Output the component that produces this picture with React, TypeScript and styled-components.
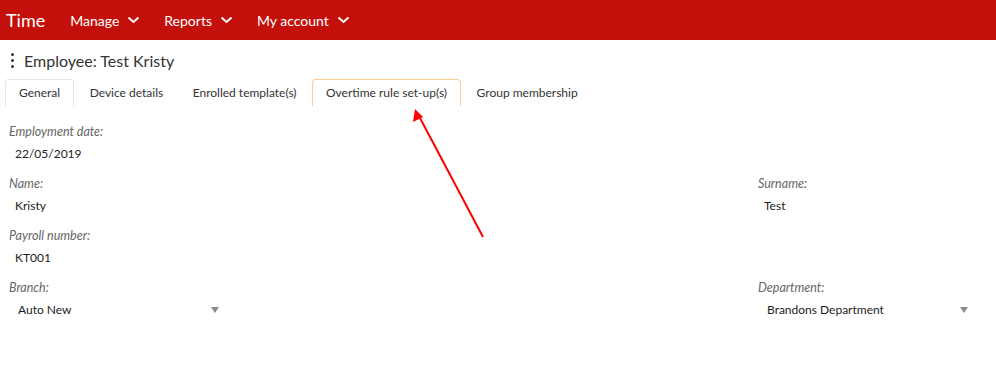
import React from "react";
import styled, { createGlobalStyle } from "styled-components";

const Global = createGlobalStyle`
  html, body { margin: 0; padding: 0; background: #fff; }
  body { font-family: Lato, "Open Sans", sans-serif; color: #333; }
`;

const Page = styled.div`
  position: relative;
  width: 996px;
  height: 370px;
  overflow: hidden;
`;

const TopBar = styled.header`
  height: 40px;
  background: #c4100b;
  display: flex;
  align-items: center;
  padding-left: 6px;
  color: #fff;
`;

const Brand = styled.div`
  font-size: 18px;
  margin-right: 25px;
`;

const NavItem = styled.div`
  font-size: 14px;
  display: flex;
  align-items: center;
  gap: 8px;
  margin-right: 24px;
`;

const Chevron = () => (
  <svg width="13" height="8" viewBox="0 0 13 8">
    <path d="M1.5 1.5 L6.5 6 L11.5 1.5" stroke="#fff" strokeWidth="2" fill="none" />
  </svg>
);

const TitleRow = styled.div`
  display: flex;
  align-items: center;
  padding: 10px 0 0 11px;
  height: 20px;
`;

const Kebab = styled.div`
  display: flex;
  flex-direction: column;
  gap: 3px;
  margin-right: 10px;
  & span {
    width: 3px;
    height: 3px;
    border-radius: 50%;
    background: #333;
  }
`;

const Title = styled.h1`
  margin: 0;
  font-size: 16px;
  font-weight: 400;
  color: #333;
`;

const Tabs = styled.div`
  display: flex;
  margin: 9px 0 0 5px;
`;

const Tab = styled.div<{ $active?: boolean; $hover?: boolean }>`
  font-size: 12px;
  height: 27px;
  line-height: 26px;
  padding: 0 13px;
  margin-right: 1.5px;
  box-sizing: border-box;
  color: #333;
  border: 1px solid
    ${(p) => (p.$active ? "#e3e6ea" : p.$hover ? "#f9cf96" : "transparent")};
  border-bottom: none;
  border-radius: 4px 4px 0 0;
`;

const Form = styled.div`
  display: grid;
  grid-template-columns: 749px 1fr;
  padding: 17px 0 0 9px;
  row-gap: 13px;
`;

const Field = styled.div`
  display: flex;
  flex-direction: column;
  height: 39px;
`;

const Label = styled.div`
  font-size: 12.5px;
  font-style: italic;
  color: #666;
  height: 17px;
  line-height: 17px;
`;

const Value = styled.div`
  font-size: 12px;
  color: #222;
  padding: 5px 0 0 6px;
  line-height: 18px;
`;

const Select = styled.div<{ $width: number }>`
  width: ${(p) => p.$width}px;
  display: flex;
  justify-content: space-between;
  align-items: center;
  font-size: 12px;
  color: #222;
  padding: 5px 0 0 9px;
  box-sizing: border-box;
  line-height: 18px;
`;

const Caret = styled.span`
  width: 0;
  height: 0;
  border-left: 4px solid transparent;
  border-right: 4px solid transparent;
  border-top: 6px solid #8a8a8a;
`;

const Arrow = styled.svg`
  position: absolute;
  left: 0;
  top: 0;
  pointer-events: none;
`;

export default function App() {
  return (
    <Page>
      <Global />
      <TopBar>
        <Brand>Time</Brand>
        <NavItem>
          Manage <Chevron />
        </NavItem>
        <NavItem>
          Reports <Chevron />
        </NavItem>
        <NavItem>
          My account <Chevron />
        </NavItem>
      </TopBar>
      <TitleRow>
        <Kebab>
          <span />
          <span />
          <span />
        </Kebab>
        <Title>Employee: Test Kristy</Title>
      </TitleRow>
      <Tabs>
        <Tab $active>General</Tab>
        <Tab>Device details</Tab>
        <Tab>Enrolled template(s)</Tab>
        <Tab $hover>Overtime rule set-up(s)</Tab>
        <Tab>Group membership</Tab>
      </Tabs>
      <Form>
        <Field>
          <Label>Employment date:</Label>
          <Value>22/05/2019</Value>
        </Field>
        <div />
        <Field>
          <Label>Name:</Label>
          <Value>Kristy</Value>
        </Field>
        <Field>
          <Label>Surname:</Label>
          <Value>Test</Value>
        </Field>
        <Field>
          <Label>Payroll number:</Label>
          <Value>KT001</Value>
        </Field>
        <div />
        <Field>
          <Label>Branch:</Label>
          <Select $width={210}>
            Auto New <Caret />
          </Select>
        </Field>
        <Field>
          <Label>Department:</Label>
          <Select $width={210}>
            Brandons Department <Caret />
          </Select>
        </Field>
      </Form>
      <Arrow width="996" height="370">
        <line x1="483" y1="237" x2="420" y2="118" stroke="#f00" strokeWidth="2" />
        <polygon points="415,109 413,122 423,117" fill="#f00" />
      </Arrow>
    </Page>
  );
}
